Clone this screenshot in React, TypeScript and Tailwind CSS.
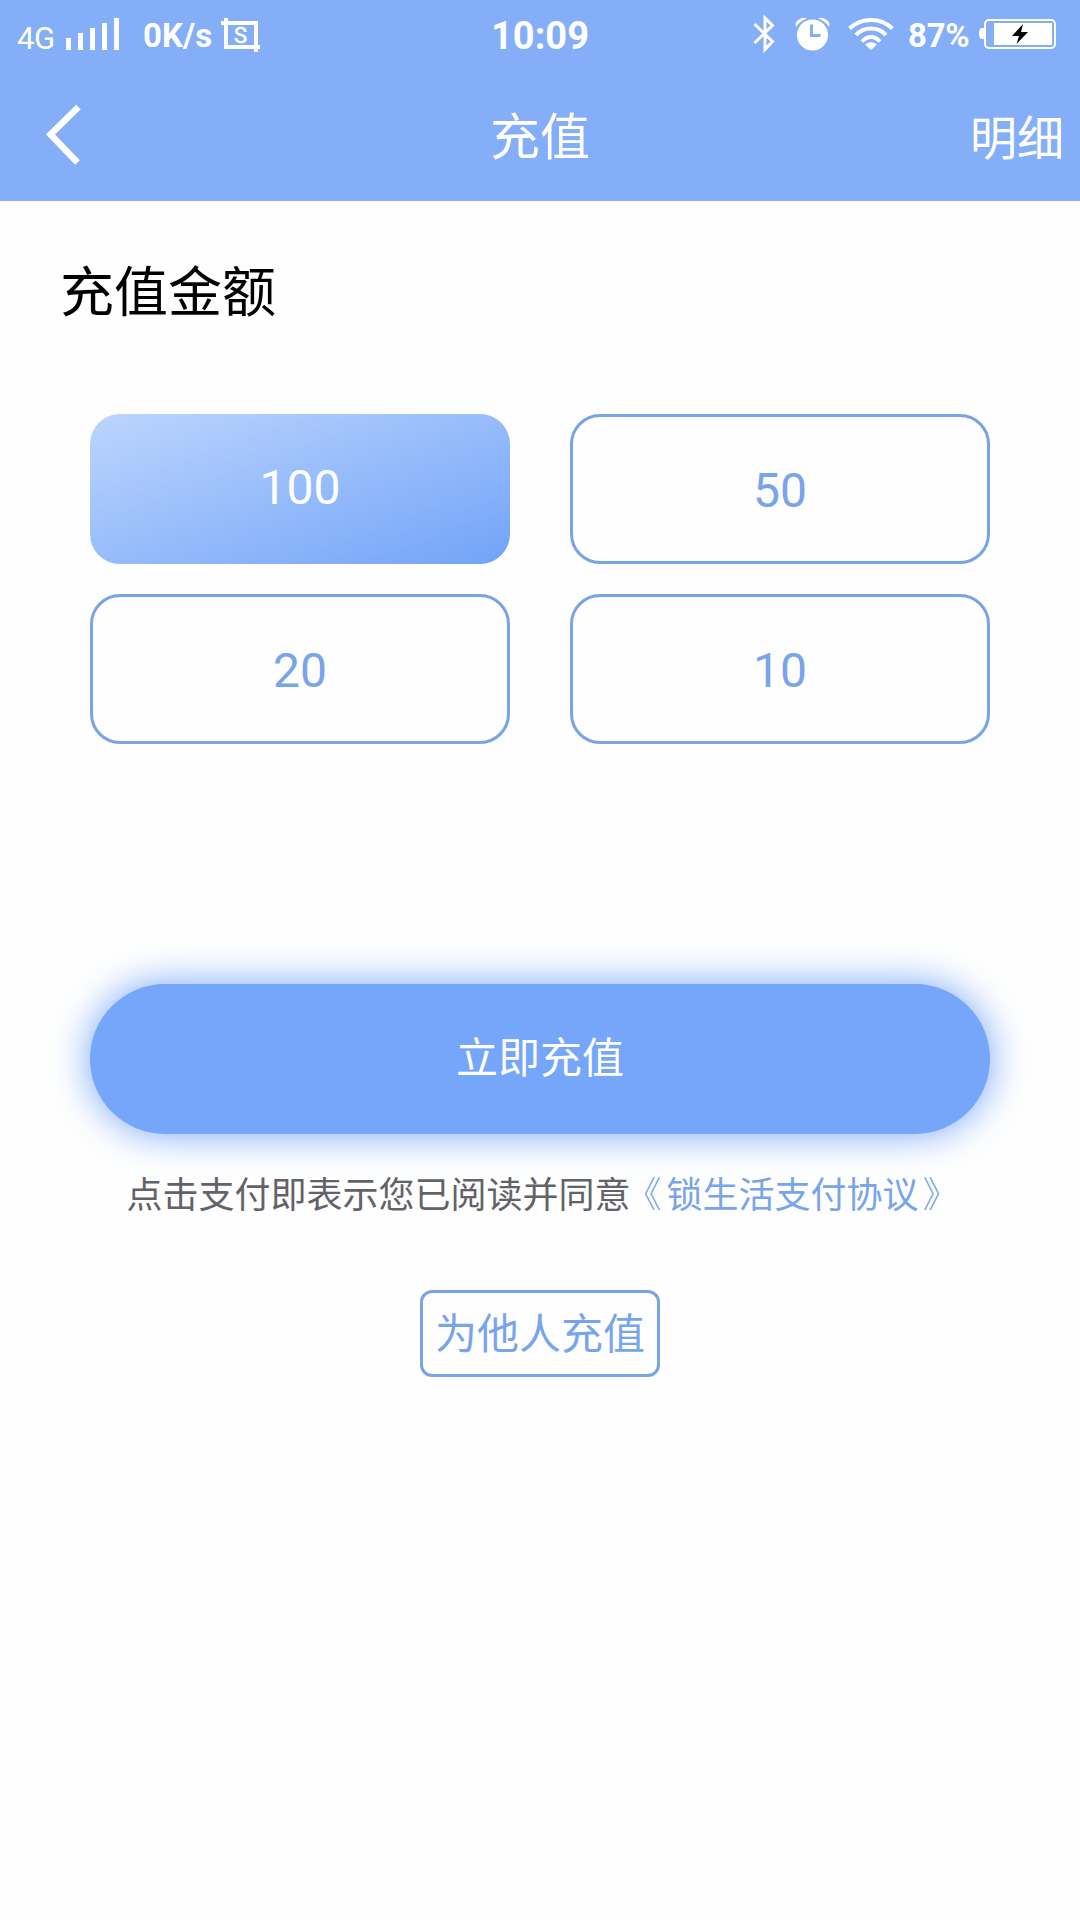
import React from "react";

const cjk = "font-['Noto_Sans_CJK_SC',sans-serif]";
const roboto = "font-[Roboto,sans-serif]";

function Signal() {
  return (
    <svg className="ml-[11px] mt-[18px] h-[32px] w-[54px] shrink-0" viewBox="0 0 54 32" fill="#fff">
      <rect x="0" y="20" width="5" height="12" />
      <rect x="12" y="15" width="5" height="17" />
      <rect x="24" y="10" width="5" height="22" />
      <rect x="36" y="5" width="5" height="27" />
      <rect x="48" y="0" width="5" height="32" />
    </svg>
  );
}

function CropS() {
  return (
    <svg className="ml-[6px] mt-[18px] h-[34px] w-[40px] shrink-0" viewBox="0 0 40 34" fill="none" stroke="#fff">
      <path d="M0 5H35V34M5 0V29H39" strokeWidth="4" />
      <text x="19.5" y="24.500" textAnchor="middle" fontFamily="Roboto" fontSize="22" fill="#fff" strokeWidth="0.6">
        S
      </text>
    </svg>
  );
}

function Bluetooth() {
  return (
    <svg className="mt-[14px] h-[40px] w-[23px] shrink-0" viewBox="0 0 23 40" fill="none" stroke="#fff" strokeWidth="3">
      <path d="M2.500 10L20.500 27.500L13 35.500V4L20.500 11.500L2.500 29" />
    </svg>
  );
}

function Alarm() {
  return (
    <svg className="ml-[20px] mt-[17px] h-[34px] w-[35px] shrink-0" viewBox="0 0 35 34">
      <path d="M1 10Q-0.500 5 4 2.500Q8 -0.500 12 1.500Q4.500 4 1 10ZM34 10Q35.500 5 31 2.500Q27 -0.500 23 1.500Q30.500 4 34 10Z" fill="#fff" />
      <circle cx="17.5" cy="18" r="15.500" fill="#fff" />
      <path d="M16.500 7.500V18.500H25.500" fill="none" stroke="#84aef8" strokeWidth="3" />
    </svg>
  );
}

function Wifi() {
  return (
    <svg className="ml-[18px] mt-[17px] h-[33px] w-[46px] shrink-0" viewBox="0 0 46 33" fill="none" stroke="#fff" strokeWidth="4">
      <path d="M1.500 11.500Q10.500 3 23 3T44.500 11.500" />
      <path d="M8 18Q14 11.500 23 11.500T38 18" />
      <path d="M14 24.500Q18 20 23 20T32 24.500" />
      <path d="M23 33L17 27.500Q23 23 29 27.500Z" fill="#fff" stroke="none" />
    </svg>
  );
}

function Battery() {
  return (
    <svg className="ml-[10px] mt-[19px] h-[31px] w-[77px] shrink-0" viewBox="0 0 77 31">
      <path d="M5 9H3Q0 9 0 14.500T3 20H5Z" fill="#fff" />
      <rect x="6" y="1" width="70" height="28" rx="4" fill="none" stroke="#fff" strokeWidth="2" />
      <rect x="15" y="4" width="58" height="22" fill="#fff" />
      <path d="M44 5L33 17H40L37.500 25L49 13H42Z" fill="#000" />
    </svg>
  );
}

function StatusBar() {
  return (
    <div className={`${roboto} grid h-[72px] grid-cols-3 whitespace-nowrap text-white`}>
      <div className="flex items-start pl-[17px]">
        <span className="mt-[23px] w-[38px] text-[31px] leading-[32px] tracking-[-0.5px]">4G</span>
        <Signal />
        <span className="ml-[23px] mt-[20px] w-[72px] text-[33px] leading-[32px] font-bold">0K/s</span>
        <CropS />
      </div>
      <div className="mt-[17px] text-center text-[38px] leading-[38px] font-bold">10:09</div>
      <div className="flex items-start justify-end pr-[24px]">
        <Bluetooth />
        <Alarm />
        <Wifi />
        <span className="ml-[14px] mt-[20px] w-[61px] text-[33px] leading-[32px] font-bold tracking-[-0.3px]">87%</span>
        <Battery />
      </div>
    </div>
  );
}

function NavBar() {
  return (
    <div className={`${cjk} grid h-[129px] grid-cols-3 items-start text-white`}>
      <svg className="ml-[46px] mt-[32px] h-[62px] w-[36px]" viewBox="0 0 36 62" fill="none" stroke="#fff" strokeWidth="6.500">
        <path d="M32.500 3L4.500 30.500L31.500 58.500" />
      </svg>
      <h1 className="mt-[36px] text-center text-[50px] leading-[50px]">充值</h1>
      <span className="mr-[16px] mt-[39px] text-right text-[47px] leading-[48px]">明细</span>
    </div>
  );
}

const outlined = "h-[150px] rounded-[30px] border-[3px] border-[#78a4e6] text-[48px] leading-[147px] text-[#78a4ea]";

export default function App() {
  return (
    <div className="flex h-[1920px] w-[1080px] flex-col overflow-hidden bg-[#fefefe]">
      <header className="h-[201px] shrink-0 bg-[#84aef8]">
        <StatusBar />
        <NavBar />
      </header>

      <main className={`${cjk} flex flex-col`}>
        <h2 className="ml-[60px] mt-[61px] text-[54px] leading-[54px] text-black">充值金额</h2>

        <div className={`${roboto} mx-[90px] mt-[98px] grid grid-cols-2 gap-x-[60px] gap-y-[30px] text-center`}>
          <div className="h-[150px] rounded-[30px] bg-[linear-gradient(160deg,#bcd5fd,#72a3f8)] text-[48px] leading-[147px] text-white">
            100
          </div>
          <div className={outlined}>50</div>
          <div className={outlined}>20</div>
          <div className={outlined}>10</div>
        </div>

        <button className="mx-[90px] mt-[240px] flex h-[150px] items-start justify-center rounded-full bg-[#75a6f9] text-[42px] leading-[141px] text-white shadow-[0_0_38px_#75a6f9]">
          立即充值
        </button>

        <p className="mt-[40px] pl-px text-center text-[36px] leading-[36px] whitespace-nowrap text-[#626268]">
          点击支付即表示您已阅读并同意
          <span className="text-[#78a4ea]">
            <span className="ml-[13px] mr-[5px] font-light [font-feature-settings:'halt']">《</span>锁生活支付协议
            <span className="mr-[14px] ml-[4px] font-light [font-feature-settings:'halt']">》</span>
          </span>
        </p>

        <button className="mt-[80px] flex h-[87px] w-[240px] items-start justify-center self-center rounded-[12px] border-[3px] border-[#78a4e6] text-[42px] leading-[75px] whitespace-nowrap text-[#78a4ea]">
          为他人充值
        </button>
      </main>
    </div>
  );
}
